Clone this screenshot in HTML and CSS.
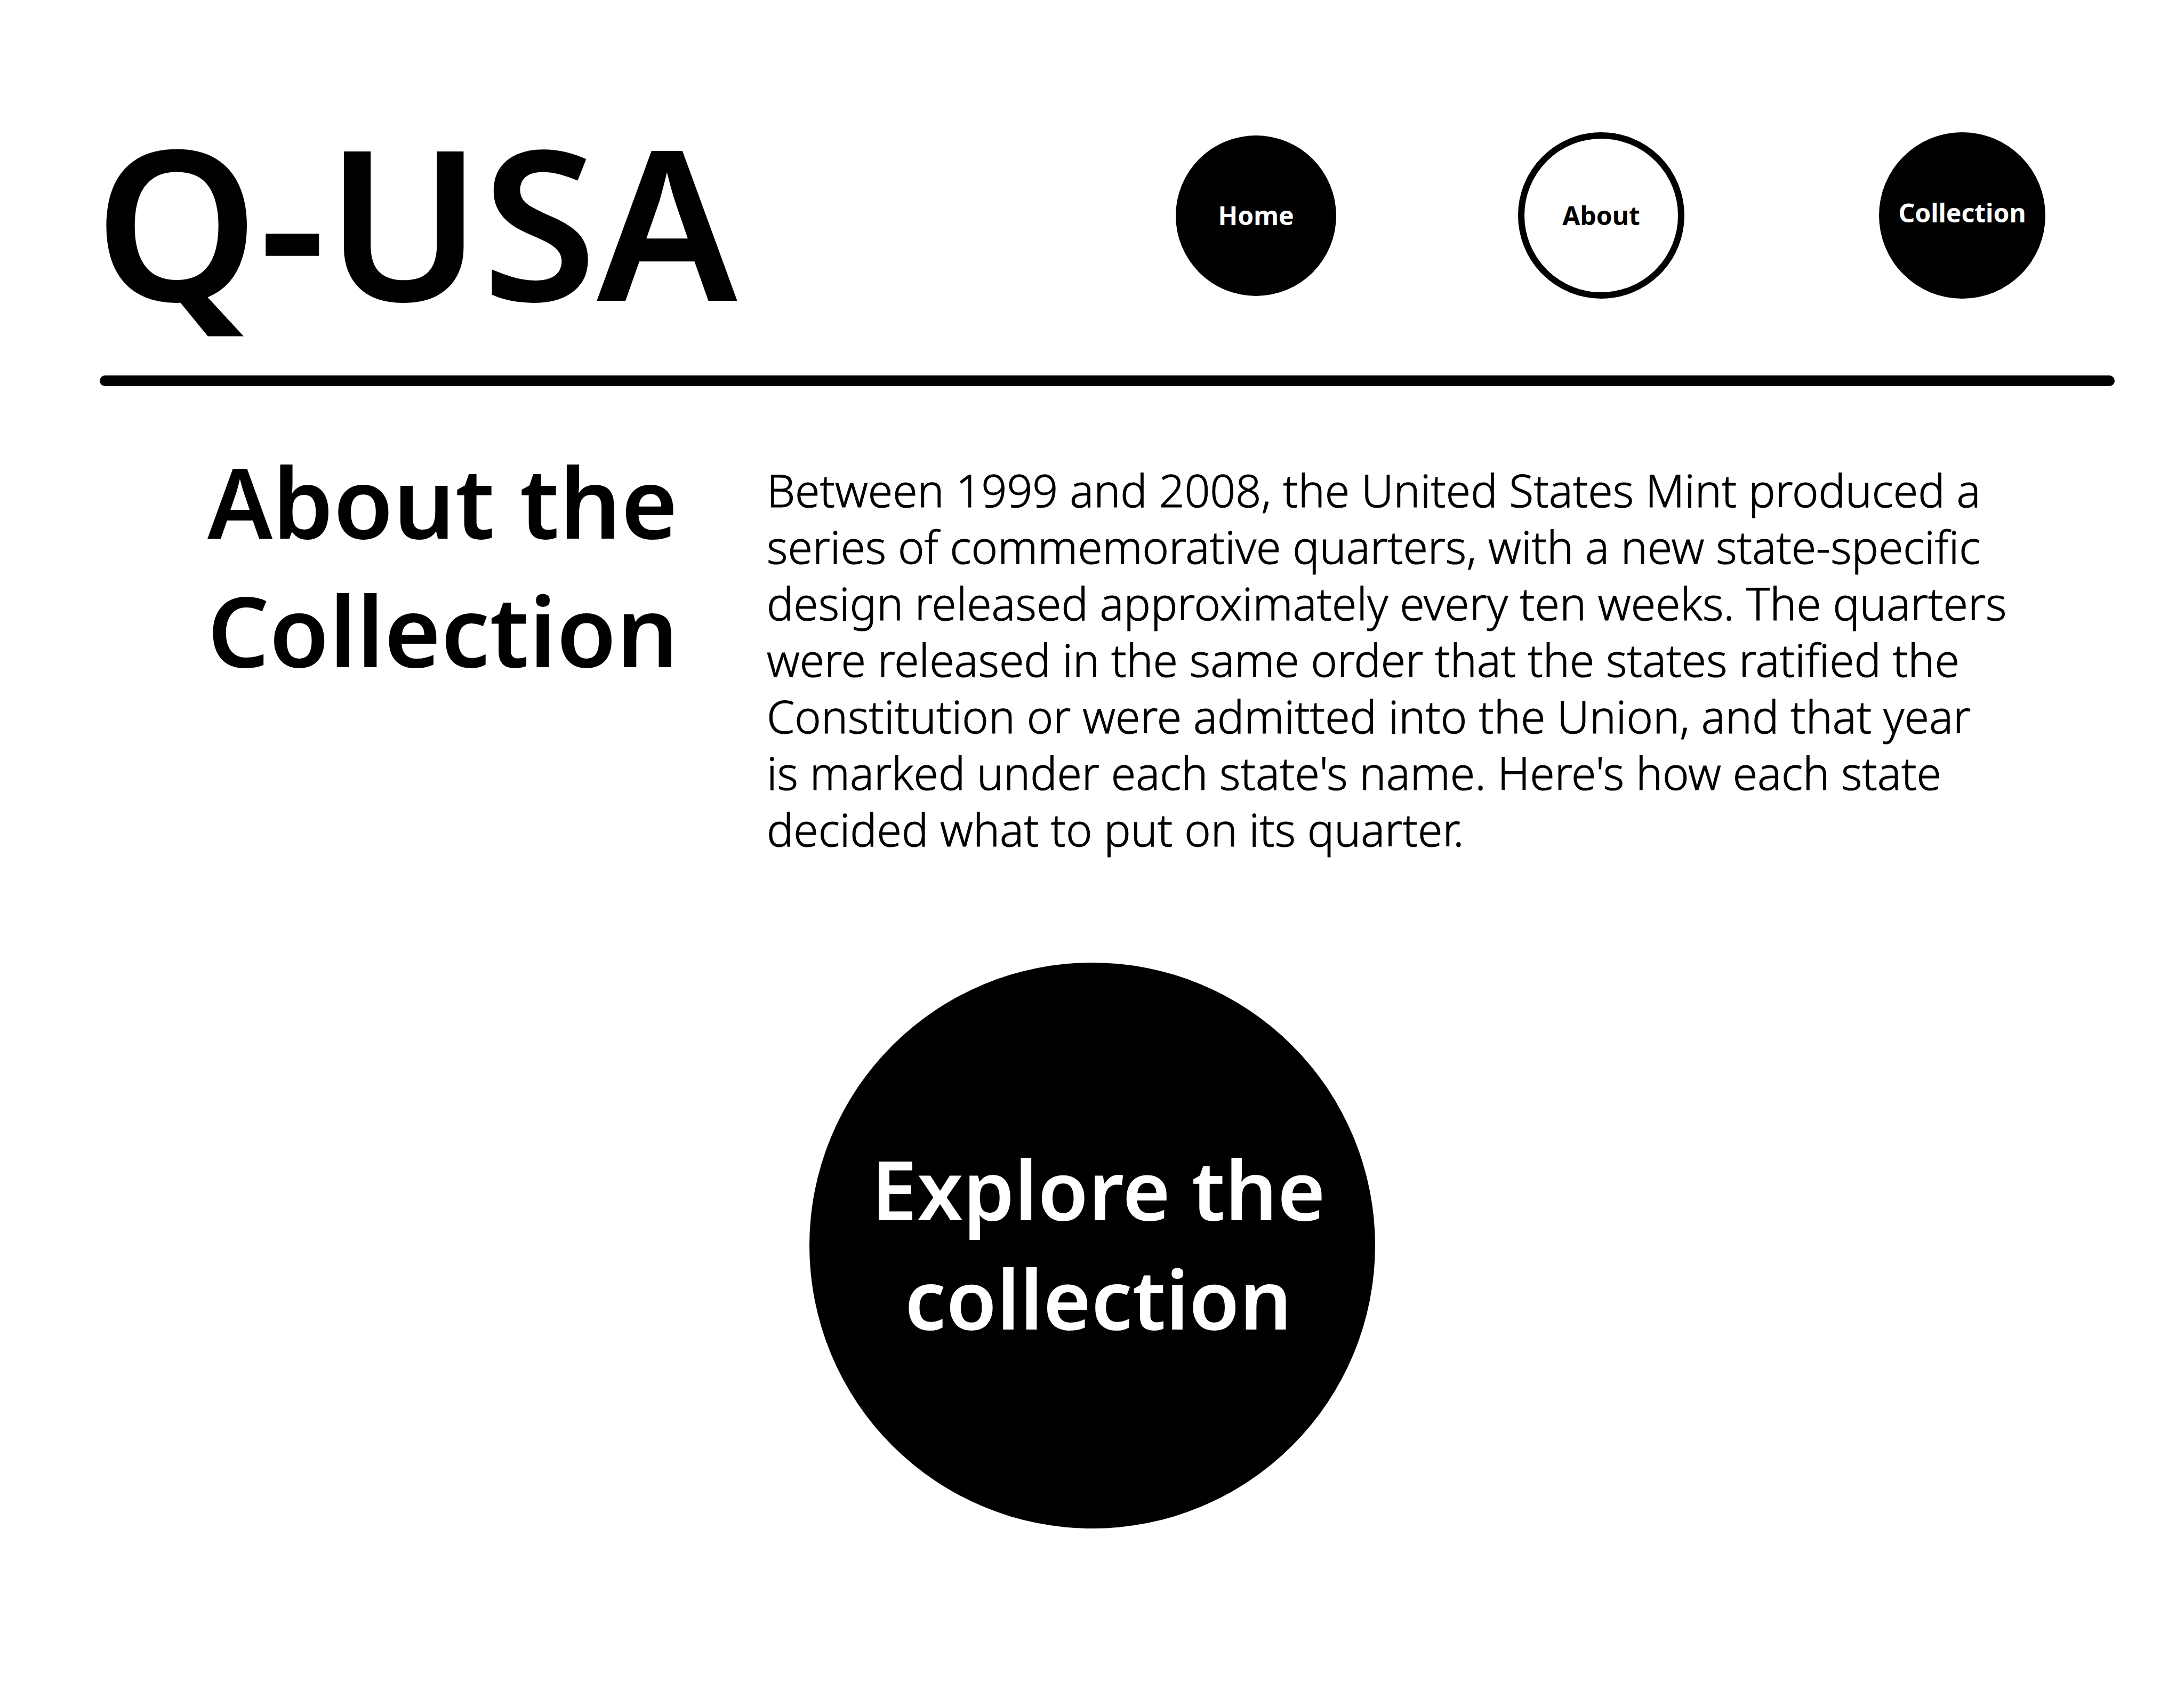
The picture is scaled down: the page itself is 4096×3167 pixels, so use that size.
FILE: index.html
```
<!DOCTYPE html>
<html lang="en">
<head>
<meta charset="utf-8">
<meta name="viewport" content="width=device-width, initial-scale=1">
<title>Q-USA: About the Collection</title>
<link rel="stylesheet" href="styles.css">
</head>
<body>
<header class="site-header">
  <h1 class="logo">Q-USA</h1>
  <nav class="site-nav" aria-label="Main">
    <a class="coin coin-home" href="#home">Home</a>
    <a class="coin coin-current" href="#about" aria-current="page">About</a>
    <a class="coin coin-collection" href="#collection">Collection</a>
  </nav>
</header>
<main>
  <section class="about" id="about">
    <h2 class="about-title">About the<br>Collection</h2>
    <p class="about-text">Between 1999 and 2008, the United States Mint produced a<br>
      series of commemorative quarters, with a new state-specific<br>
      design released approximately every ten weeks. The quarters<br>
      were released in the same order that the states ratified the<br>
      Constitution or were admitted into the Union, and that year<br>
      is marked under each state's name. Here's how each state<br>
      decided what to put on its quarter.</p>
  </section>
  <section class="explore">
    <a class="explore-coin" href="#collection">Explore the<br>collection</a>
  </section>
</main>
</body>
</html>
```
FILE: styles.css
```
* {
  box-sizing: border-box;
}

body {
  margin: 0;
  background: #fff;
  color: #000;
  font-family: "Noto Sans", "Open Sans", sans-serif;
}

h1,
h2,
p {
  margin: 0;
}

a {
  color: inherit;
  text-decoration: none;
}

/* Header */
.site-header {
  display: flex;
  justify-content: space-between;
  align-items: flex-start;
  margin: 0 130px 0 187px;
  padding: 248px 130px 128px 0;
  position: relative;
}

.site-header::after {
  content: "";
  position: absolute;
  left: 0;
  right: 0;
  top: 100%;
  height: 20px;
  border-radius: 10px;
  background: #000;
}

/* Pulls the round side of the Q out to the rule's left end */
.logo {
  margin-left: -10px;
  font-size: 392px;
  line-height: 328px;
  font-weight: 600;
}

.site-nav {
  display: flex;
  align-items: center;
  gap: 341px;
}

.coin {
  display: flex;
  align-items: center;
  justify-content: center;
  width: 312px;
  height: 312px;
  border-radius: 50%;
  background: #000;
  color: #fff;
  font-size: 48px;
  line-height: 64px;
  font-weight: 700;
}

.coin-home {
  width: 301px;
  height: 301px;
}

.coin-current {
  border: 12px solid #000;
  background: #fff;
  color: #000;
}

.coin-collection {
  margin-left: 24px;
  padding-bottom: 10px;
}

/* About */
.about {
  display: grid;
  grid-template-columns: 1049px 1fr;
  padding: 115px 130px 0 389px;
}

.about-title {
  font-size: 182px;
  line-height: 241px;
  font-weight: 650;
}

.about-text {
  padding-top: 47px;
  font-size: 84px;
  line-height: 106px;
  font-weight: 300;
  -webkit-text-stroke: 1px currentColor;
}

/* Call to action */
.explore {
  display: flex;
  justify-content: center;
  padding: 197px 0 300px;
}

.explore-coin {
  display: flex;
  align-items: center;
  justify-content: center;
  width: 1061px;
  height: 1061px;
  padding: 0 0 10px 24px;
  border-radius: 50%;
  background: #000;
  color: #fff;
  font-size: 154px;
  line-height: 205px;
  font-weight: 650;
  text-align: center;
}
```
